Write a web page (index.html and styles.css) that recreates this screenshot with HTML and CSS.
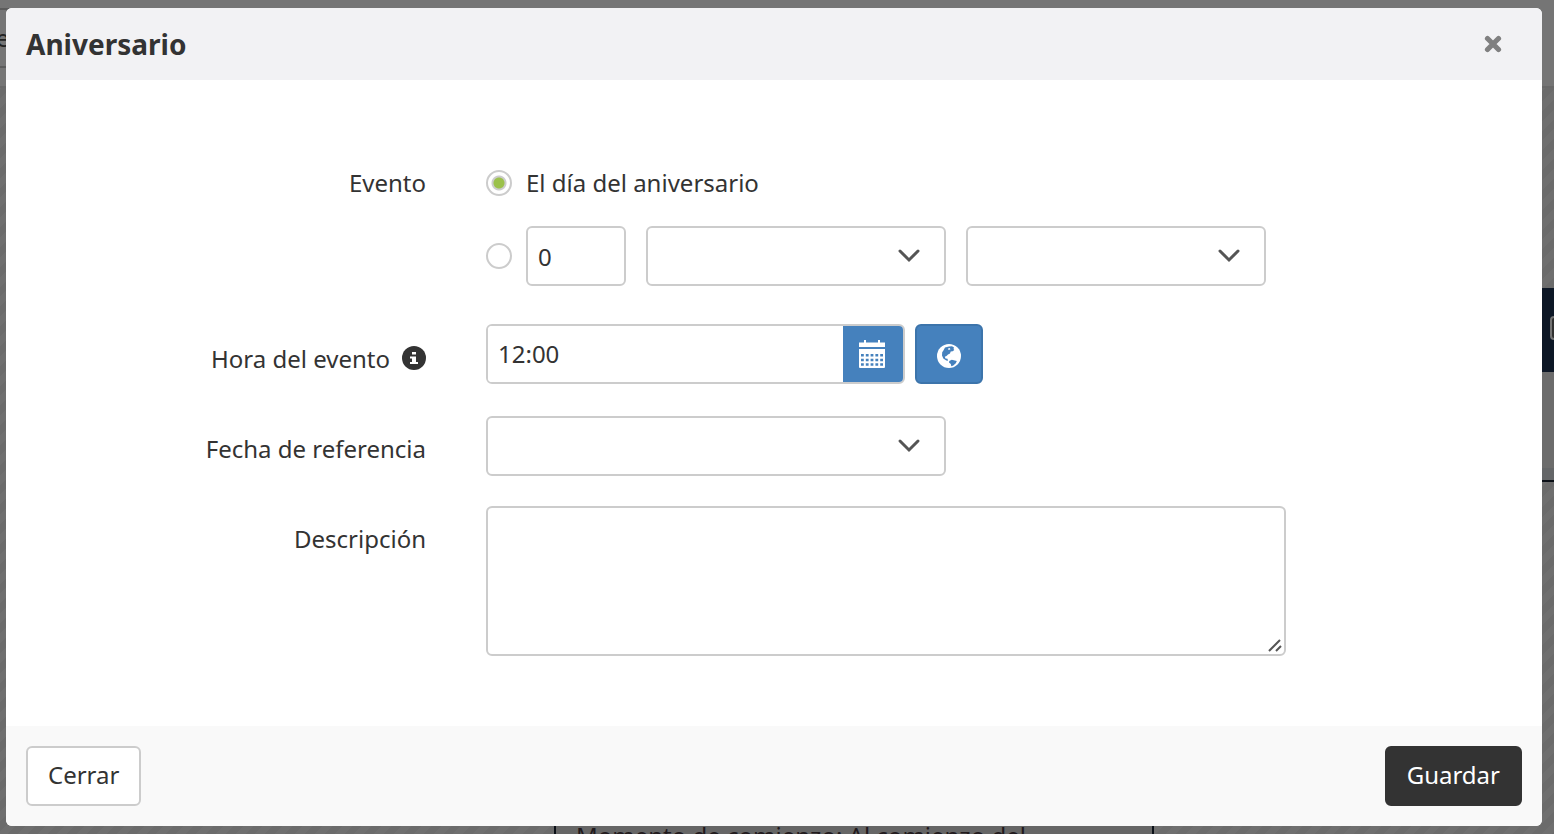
FILE: index.html
```html
<!DOCTYPE html>
<html lang="es">
<head>
<meta charset="utf-8">
<meta name="viewport" content="width=device-width, initial-scale=1">
<title>Aniversario</title>
<link rel="stylesheet" href="styles.css">
</head>
<body>
<div class="backdrop" aria-hidden="true">
  <div class="topbar"><div class="crumb">e</div></div>
  <div class="panel"><span class="panel-box"></span></div>
  <div class="card">Momento de comienzo: Al comienzo del</div>
</div>
<form class="modal" role="dialog" aria-labelledby="title">
  <header class="modal-header">
    <h1 class="modal-title" id="title">Aniversario</h1>
    <button class="close" type="button" aria-label="Quitar">
      <svg width="18" height="18" viewBox="0 0 18 18"><path d="M3.500 3.500l11 11M14.500 3.500l-11 11" stroke="#808080" stroke-width="5.200" stroke-linecap="round"/></svg>
    </button>
  </header>
  <main class="modal-body">
    <div class="row row-event" role="radiogroup" aria-labelledby="event-label">
      <span class="label label-event" id="event-label">Evento</span>
      <div class="options">
        <label class="option"><input class="radio" type="radio" name="event" checked>El día del aniversario</label>
        <div class="option">
          <input class="radio" type="radio" name="event" aria-label="Otro día">
          <div class="offset">
            <input class="field number" type="text" value="0" aria-label="Cantidad">
            <span class="select-wrap">
              <select class="field" aria-label="Unidad"><option></option></select>
              <svg class="chevron" width="24" height="16" viewBox="0 0 24 16"><path d="M3 3l9 9 9-9"/></svg>
            </span>
            <span class="select-wrap">
              <select class="field" aria-label="Antes o después"><option></option></select>
              <svg class="chevron" width="24" height="16" viewBox="0 0 24 16"><path d="M3 3l9 9 9-9"/></svg>
            </span>
          </div>
        </div>
      </div>
    </div>
    <div class="row row-time">
      <label class="label label-time" for="time">Hora del evento
        <svg class="info" width="24" height="24" viewBox="0 0 24 24"><circle cx="12" cy="12" r="12" fill="#333"/><path fill="#fff" d="M10 6h4v2.500h-4zM8 10.500h6v5.500h2v2H8v-2h2v-3.500H8z"/></svg>
      </label>
      <div class="time">
        <div class="input-group">
          <input class="time-input" id="time" type="text" value="12:00">
          <button class="calendar" type="button" aria-label="Elegir hora">
            <svg width="26" height="28" viewBox="0 0 26 28"><path fill="#fff" d="M0 2.500h5V0h2v2.500h12V0h2v2.500h5V7H0zM0 9h26v18q0 1-1 1H1q-1 0-1-1z"/><path stroke="#4581bd" stroke-width="2.600" stroke-dasharray="2.800 2" d="M2 15.300h22.200M2 20h22.200M2 24.500h22.200"/></svg>
          </button>
        </div>
        <button class="globe" type="button" aria-label="Zona horaria">
          <svg width="24" height="24" viewBox="0 0 24 24"><circle cx="12" cy="12" r="12" fill="#fff"/><path fill="#4581bd" d="M8 3.500l4-1 3-.3 2 1.300-.5 1.500.8 1-1.600 1.200-2 .3-.7 2-2 1-1.500 1.500-1.700.8.7 1.700 2 .3.500 2-1.700-.4-3-2-1.300-3 .2-3.200 1.200-1.600zM12.300 17l2.500-1.200 3 .8 2 .4-1 2.200-2.500 2.300-2 .7-.5-2.200-1.800-1.500z"/><path fill="#fff" d="M10.800 4.800l1.800-.8.9 1.300-1.700.8zM9 13l1.500-.8.7 1z"/></svg>
        </button>
      </div>
    </div>
    <div class="row row-date">
      <label class="label" for="date">Fecha de referencia</label>
      <span class="select-wrap select-wide">
        <select class="field" id="date"><option></option></select>
        <svg class="chevron" width="24" height="16" viewBox="0 0 24 16"><path d="M3 3l9 9 9-9"/></svg>
      </span>
    </div>
    <div class="row">
      <label class="label" for="description">Descripción</label>
      <div class="textarea-wrap">
        <textarea class="field textarea" id="description"></textarea>
        <svg class="grip" width="16" height="16" viewBox="0 0 16 16"><path d="M2 14L13 3M9 14l5-5"/></svg>
      </div>
    </div>
  </main>
  <footer class="modal-footer">
    <button class="button" type="button">Cerrar</button>
    <button class="button primary" type="submit">Guardar</button>
  </footer>
</form>
</body>
</html>
```
FILE: styles.css
```css
* { box-sizing: border-box; }

body {
  margin: 0;
  min-height: 100vh;
  padding: 8px 12px 8px 6px;
  display: flex;
  overflow: hidden;
  background: #6e6e6e repeating-linear-gradient(135deg, #6f6f6f 0 7px, #6b6b6b 7px 14px);
  color: #333;
  font: 24px/34px "Noto Sans", "Open Sans", sans-serif;
}

input, select, textarea, button { font: inherit; color: inherit; }
svg { display: block; fill: none; }

.backdrop { position: absolute; inset: 0; overflow: hidden; }
.topbar { height: 88px; background: #757575; border-bottom: 2px solid #696969; }
.crumb {
  position: absolute;
  top: 8px;
  left: -6px;
  width: 40px;
  height: 60px;
  border: 2px solid #5c5c5c;
  color: #222;
  line-height: 56px;
}
.panel {
  position: absolute;
  top: 288px;
  right: 0;
  width: 40px;
  height: 194px;
  border-bottom: 2px solid #0b1017;
  background: linear-gradient(#0d1726 84px, #6c6c6c 84px 180px, #646668 180px);
}
.panel-box {
  position: absolute;
  top: 28px;
  right: -16px;
  width: 20px;
  height: 24px;
  border: 2px solid #737373;
  border-radius: 4px;
  background: #303030;
}
.card {
  position: absolute;
  left: 554px;
  bottom: -30px;
  width: 600px;
  height: 50px;
  padding-left: 20px;
  border: solid #0b1017;
  border-width: 0 2px;
  background: #666;
  color: #211a1d;
  line-height: 44px;
}

.modal {
  position: relative;
  flex: 1;
  min-width: 0;
  display: flex;
  flex-direction: column;
  overflow: hidden;
  border-radius: 6px;
  background: #fff;
}
.modal-header {
  display: flex;
  align-items: center;
  justify-content: space-between;
  height: 72px;
  padding: 0 40px 0 20px;
  background: #f2f2f4;
}
.modal-title { margin: 0; font-size: 28px; font-weight: 700; }
.close { padding: 0; border: 0; background: none; }

.modal-body { flex: 1; padding: 86px 20px 70px; }
.row { display: grid; grid-template-columns: 400px 1fr; column-gap: 60px; }
.row-event { margin-bottom: 38px; }
.row-time { margin-bottom: 32px; }
.row-date { margin-bottom: 30px; }
.label {
  display: flex;
  align-items: center;
  justify-content: flex-end;
  align-self: start;
  gap: 12px;
  padding-top: 16px;
}
.label-event { padding-top: 0; }
.label-time { padding-top: 18px; }
.info { margin-bottom: 2px; }

.options { display: grid; gap: 26px; }
.option { display: flex; align-items: center; gap: 14px; }
.radio {
  appearance: none;
  flex: none;
  width: 26px;
  height: 26px;
  margin: 0;
  border: 2px solid #ccc;
  border-radius: 50%;
  background: #fff;
}
.radio:checked {
  background: radial-gradient(circle, #9bc14b 5px, #ccc 6px, #ccc 7px, #fff 8px);
}
.offset { display: flex; gap: 20px; }
.field {
  display: block;
  width: 100%;
  height: 60px;
  margin: 0;
  padding: 0 10px;
  border: 2px solid #ccc;
  border-radius: 6px;
  background: #fff;
  appearance: none;
}
.number { width: 100px; }
.select-wrap { position: relative; width: 300px; }
.select-wide { width: 460px; }
.chevron {
  position: absolute;
  top: 22px;
  right: 25px;
  stroke: #555;
  stroke-width: 3;
  stroke-linecap: round;
  pointer-events: none;
}

.time { display: flex; gap: 10px; }
.input-group {
  display: flex;
  width: 419px;
  height: 60px;
  overflow: hidden;
  border: 2px solid #ccc;
  border-radius: 6px;
}
.time-input { flex: 1; min-width: 0; padding: 0 10px; border: 0; }
.calendar, .globe {
  display: grid;
  place-items: center;
  padding: 0;
  border: 0;
  background: #4581bd;
}
.calendar { width: 60px; padding-right: 2px; }
.globe { width: 68px; height: 60px; padding-top: 4px; border: 2px solid #3c74ab; border-radius: 6px; }

.textarea-wrap { position: relative; max-width: 800px; }
.textarea { height: 150px; padding: 10px; resize: none; }
.grip { position: absolute; right: 3px; bottom: 3px; stroke: #555; stroke-width: 2; }

.modal-footer {
  display: flex;
  justify-content: space-between;
  padding: 20px;
  background: #f9f9f9;
}
.button {
  height: 60px;
  padding: 0 20px 2px;
  border: 2px solid #ccc;
  border-radius: 6px;
  background: #fff;
}
.primary { border-color: #333; background: #333; color: #fff; }
```
